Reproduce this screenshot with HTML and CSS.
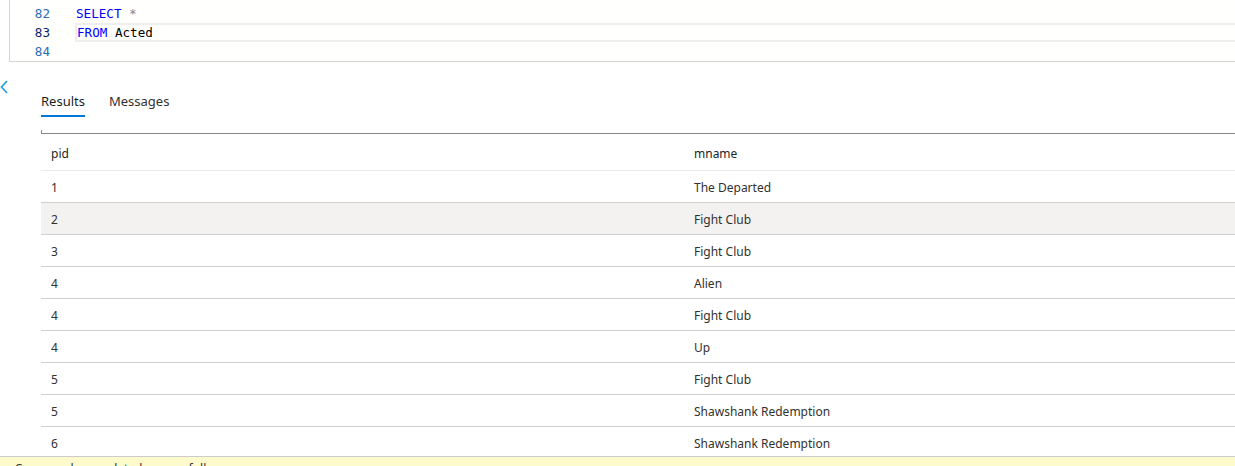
FILE: index.html
```html
<!DOCTYPE html>
<html>
<head>
<meta charset="utf-8">
<link rel="stylesheet" href="styles.css">
</head>
<body>
<div class="page">
  <div class="editor">
    <div class="gutter">
      <div class="ln">82</div>
      <div class="ln cur">83</div>
      <div class="ln">84</div>
    </div>
    <div class="code">
      <div class="line"><span class="kw">SELECT</span> <span class="op">*</span></div>
      <div class="line current"><span class="kw">FROM</span> Acted</div>
      <div class="line"></div>
    </div>
  </div>
  <div class="results">
    <div class="side">
      <svg class="chev" width="9" height="14" viewBox="0 0 9 14"><polyline points="7,1 1.5,7 7,13" fill="none" stroke="#1a9be6" stroke-width="1.6"/></svg>
    </div>
    <div class="content">
      <div class="tabs">
        <div class="tab active">Results</div>
        <div class="tab">Messages</div>
      </div>
      <div class="grid-top"></div>
      <div class="grid">
        <div class="row head"><div class="cell c1">pid</div><div class="cell">mname</div></div>
        <div class="row"><div class="cell c1">1</div><div class="cell">The Departed</div></div>
        <div class="row hover"><div class="cell c1">2</div><div class="cell">Fight Club</div></div>
        <div class="row"><div class="cell c1">3</div><div class="cell">Fight Club</div></div>
        <div class="row"><div class="cell c1">4</div><div class="cell">Alien</div></div>
        <div class="row"><div class="cell c1">4</div><div class="cell">Fight Club</div></div>
        <div class="row"><div class="cell c1">4</div><div class="cell">Up</div></div>
        <div class="row"><div class="cell c1">5</div><div class="cell">Fight Club</div></div>
        <div class="row"><div class="cell c1">5</div><div class="cell">Shawshank Redemption</div></div>
        <div class="row"><div class="cell c1">6</div><div class="cell">Shawshank Redemption</div></div>
      </div>
    </div>
  </div>
  <div class="status"><span class="status-text">›  Commands completed successfully.</span></div>
</div>
</body>
</html>
```

FILE: styles.css
```css
html, body {
  margin: 0;
  padding: 0;
  background: #ffffff;
  overflow: hidden;
}
.page {
  width: 1235px;
  height: 466px;
  display: flex;
  flex-direction: column;
  font-family: "Noto Sans", "Open Sans", sans-serif;
  color: #323130;
}
.editor {
  flex: none;
  margin-left: 9px;
  border-left: 1px solid #d4d4d4;
  border-bottom: 1px solid #d4d4d4;
  background: #fffffe;
  display: flex;
  padding-top: 4px;
  box-sizing: content-box;
  height: 57px;
  font-family: "DejaVu Sans Mono", "Liberation Mono", monospace;
  font-size: 12.6px;
}
.gutter {
  width: 40px;
  flex: none;
}
.ln {
  height: 19px;
  line-height: 19px;
  text-align: right;
  color: #2a6cb8;
}
.ln.cur {
  color: #0b216f;
}
.code {
  margin-left: 26px;
  flex: 1;
}
.line {
  height: 19px;
  line-height: 19px;
  color: #000000;
  box-sizing: border-box;
  white-space: pre;
}
.line.current {
  border: 2px solid #eeeeee;
  border-right: none;
  line-height: 15px;
  margin-left: -1px;
}
.kw { color: #0000ff; }
.op { color: #778899; }

.results {
  flex: 1;
  min-height: 0;
  display: flex;
  overflow: hidden;
}
.side {
  width: 41px;
  flex: none;
}
.chev {
  display: block;
  margin-top: 18px;
}
.content {
  flex: 1;
  min-width: 0;
}
.tabs {
  display: flex;
  gap: 24px;
  margin-top: 30px;
  font-size: 13px;
}
.tab {
  line-height: 18px;
  padding-bottom: 5px;
  border-bottom: 2px solid transparent;
  color: #323130;
}
.tab.active {
  border-bottom-color: #0078d4;
  color: #201f1e;
}
.grid-top {
  margin-top: 13px;
  height: 3px;
  border-left: 1px solid #8a8886;
  border-bottom: 1px solid #8a8886;
}
.grid {
  font-size: 12px;
}
.row {
  display: flex;
  height: 32px;
  box-sizing: border-box;
  border-bottom: 1px solid #d2d0ce;
  align-items: center;
}
.row.head {
  height: 37px;
  border-bottom-color: #edebe9;
  color: #201f1e;
}
.row.hover {
  background: #f3f2f1;
}
.cell {
  padding-left: 10px;
  padding-top: 2px;
  white-space: nowrap;
}
.cell.c1 {
  width: 643px;
  box-sizing: border-box;
  flex: none;
}
.status {
  flex: none;
  height: 9px;
  border-top: 1px solid #cccccc;
  background: #fdfacb;
  overflow: hidden;
  font-size: 12px;
}
.status-text {
  display: block;
  padding-left: 8px;
  padding-top: 4px;
  line-height: 16px;
  color: #323130;
}
```
